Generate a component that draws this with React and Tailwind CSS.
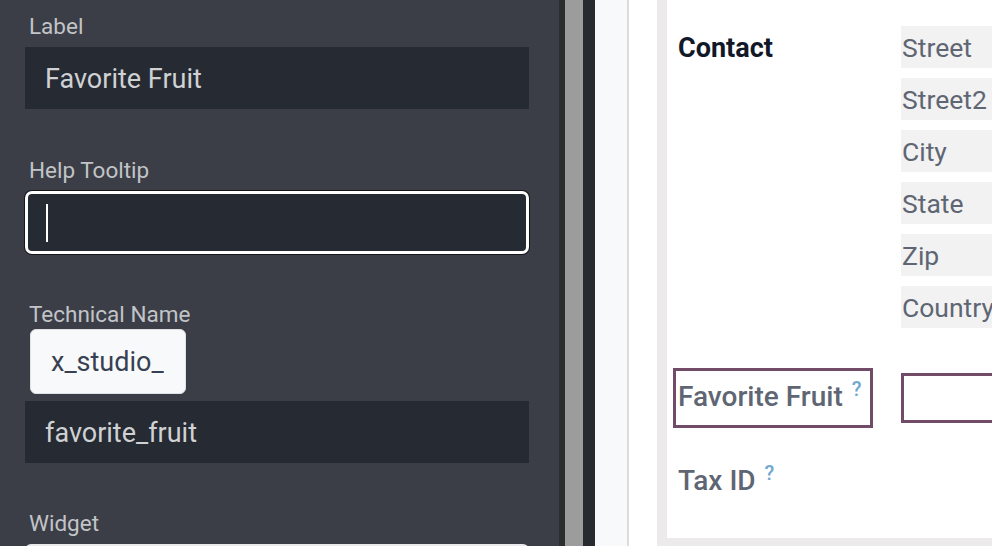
export default function App() {
  const fields = ["Street", "Street2", "City", "State", "Zip", "Country"];
  return (
    <div className="flex h-[546px] w-[992px] overflow-hidden font-['Roboto',sans-serif]">
      <div className="w-[559px] shrink-0 bg-[#3b3e47] pl-[25px] pr-[30px]">
        <div className="mt-[10px] h-[30px] pl-[4px] pt-[3px] flex items-center text-[22.5px] text-[#c2c4c8]">Label</div>
        <div className="mt-[7px] h-[62px] bg-[#262a32] flex items-center pl-[20px] pt-[2px] text-[27px] text-[#cfd1d4]">Favorite Fruit</div>

        <div className="mt-[45px] h-[30px] pl-[4px] pt-[3px] flex items-center text-[22.5px] text-[#c2c4c8]">Help Tooltip</div>
        <div className="mt-[7px] h-[63px] bg-[#262a32] border-[3px] border-white rounded-[7px] shadow-[0_0_0_1px_#15171b] flex items-center pl-[18px]">
          <div className="w-[2px] h-[38px] bg-white" />
        </div>

        <div className="mt-[44px] h-[30px] pl-[4px] pt-[3px] flex items-center text-[22.5px] text-[#c2c4c8]">Technical Name</div>
        <div className="mt-[1px] ml-[5px] w-[156px] h-[65px] bg-[#f8f9fa] border border-[#dee2e6] rounded-[6px] flex items-center pl-[20px] pt-[2px] text-[27px] text-[#374151]">x_studio_</div>
        <div className="mt-[7px] h-[62px] bg-[#262a32] flex items-center pl-[20px] pt-[2px] text-[27px] text-[#cfd1d4]">favorite_fruit</div>

        <div className="mt-[44px] h-[30px] pl-[4px] pt-[3px] flex items-center text-[22.5px] text-[#c2c4c8]">Widget</div>
        <div className="mt-[7px] h-[62px] bg-[#262a32] border-2 border-[#e9eaec] rounded-[6px]" />
      </div>

      <div className="w-[6px] shrink-0 bg-[#2c2d2f]" />
      <div className="w-[18px] shrink-0 bg-[#9c9c9c]" />
      <div className="w-[12px] shrink-0 bg-[#272b2f]" />
      <div className="w-[34px] shrink-0 bg-[#f8f9fb] border-r-2 border-[#dcdcdf]" />
      <div className="w-[28px] shrink-0 bg-white" />
      <div className="flex-1 min-w-0 bg-[#edeaeb] pl-[10px] pb-[8px] flex">
        <div className="flex-1 min-w-0 bg-white overflow-hidden pt-[26px] pl-[11px]">
          <div className="flex">
            <div className="w-[223px] shrink-0 h-[42px] pt-[2px] flex items-center text-[27px] font-bold text-[#111827]">Contact</div>
            <div className="flex flex-col gap-[10px]">
              {fields.map((f) => (
                <div key={f} className="w-[200px] h-[42px] bg-[#f2f2f2] pl-[1px] pt-[2px] flex items-center text-[26.5px] text-[#5f6673]">
                  {f}
                </div>
              ))}
            </div>
          </div>

          <div className="mt-[40px] flex items-center">
            <div className="-ml-[5px] w-[200px] shrink-0 h-[60px] border-[3px] border-[#714b67] pl-[2px] pb-[3px] flex items-center text-[28px] font-medium text-[#5f6673]">
              Favorite Fruit
              <span className="ml-[9px] -mt-[16px] text-[20px] font-medium text-[#6fa8cf]">?</span>
            </div>
            <div className="ml-[28px] w-[200px] shrink-0 h-[50px] border-[3px] border-[#714b67] bg-white" />
          </div>

          <div className="mt-[33px] h-[40px] flex items-center text-[28px] font-medium text-[#5f6673]">
            Tax ID
            <span className="ml-[9px] -mt-[16px] text-[20px] font-medium text-[#6fa8cf]">?</span>
          </div>
        </div>
      </div>
    </div>
  );
}
